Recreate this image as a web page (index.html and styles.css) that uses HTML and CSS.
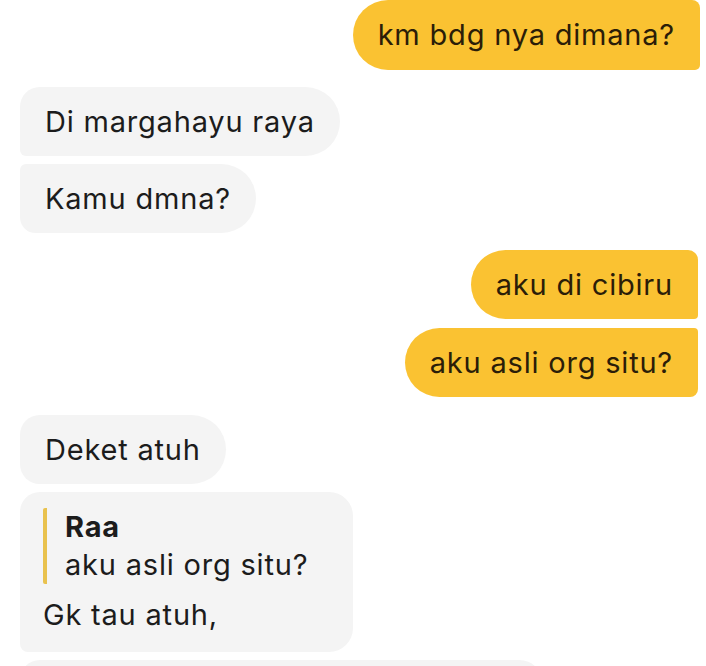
FILE: index.html
```html
<!DOCTYPE html>
<html lang="id">
<head>
<meta charset="utf-8">
<title>Chat</title>
<link rel="stylesheet" href="styles.css">
</head>
<body>
<div class="chat">
  <div class="group sent">
    <div class="bubble out first-out">km bdg nya dimana?</div>
  </div>
  <div class="group recv">
    <div class="bubble in in-first">Di margahayu raya</div>
    <div class="bubble in in-last">Kamu dmna?</div>
  </div>
  <div class="group sent">
    <div class="bubble out out-first">aku di cibiru</div>
    <div class="bubble out out-last">aku asli org situ?</div>
  </div>
  <div class="group recv late">
    <div class="bubble in in-single">Deket atuh</div>
    <div class="bubble in reply">
      <div class="quote">
        <div class="quote-name">Raa</div>
        <div class="quote-text">aku asli org situ?</div>
      </div>
      <div class="reply-text">Gk tau atuh,</div>
    </div>
    <div class="bubble in next">&nbsp;</div>
  </div>
</div>
</body>
</html>
```
FILE: styles.css
```css
html, body {
  margin: 0;
  padding: 0;
  background: #ffffff;
  height: 666px;
  overflow: hidden;
}

.chat {
  font-family: Inter, "Noto Sans", sans-serif;
  font-size: 29px;
  line-height: 33px;
  letter-spacing: 0.8px;
  padding: 0 6px 0 20px;
  display: flex;
  flex-direction: column;
  gap: 17px;
}

.group {
  display: flex;
  flex-direction: column;
  gap: 8px;
}

.group.sent {
  align-items: flex-end;
  gap: 9px;
}

.group.recv {
  align-items: flex-start;
}

.group.late {
  margin-top: 1px;
}

.bubble {
  padding: 18px 25px;
}

.out {
  background: #fac232;
  color: #2b1d08;
  border-radius: 35px 8px 4px 35px;
  margin-right: 2px;
}

.first-out {
  margin-right: 0;
  padding-bottom: 19px;
  border-radius: 35px 8px 5px 35px;
}

.out-first {
  border-radius: 35px 10px 4px 35px;
}

.out-last {
  border-radius: 35px 4px 8px 35px;
}

.in {
  background: #f4f4f4;
  color: #1c1c1c;
}

.in-first {
  border-radius: 20px 35px 35px 6px;
}

.in-last {
  border-radius: 6px 35px 35px 16px;
}

.in-single {
  border-radius: 20px 35px 35px 20px;
}

.reply {
  width: 333px;
  box-sizing: border-box;
  padding: 16px 20px 21px 23px;
  border-radius: 20px 24px 24px 8px;
}

.quote {
  border-left: 4px solid #e9c24e;
  border-radius: 2px;
  padding-left: 18px;
  line-height: 38px;
  margin-bottom: 14px;
}

.quote-name {
  font-weight: 700;
}

.next {
  width: 523px;
  box-sizing: border-box;
  border-radius: 20px 24px 24px 8px;
}
```
